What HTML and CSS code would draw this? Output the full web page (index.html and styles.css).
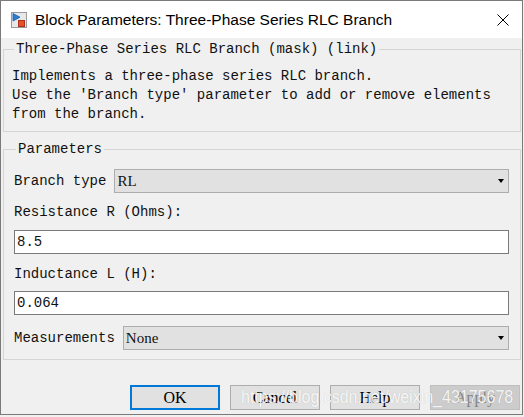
FILE: index.html
```html
<!DOCTYPE html>
<html>
<head>
<meta charset="utf-8">
<link rel="stylesheet" href="styles.css">
</head>
<body>
<div class="window">
  <div class="titlebar">
    <svg class="app-icon" width="16" height="16" viewBox="0 0 16 16">
      <rect x="0.5" y="0.5" width="15" height="15" fill="#e8e8e8" stroke="#9a9a9a"/>
      <polygon points="2,1.5 2,9 9,5.2" fill="#2a7fd4" stroke="#1a5fa8" stroke-width="0.8"/>
      <rect x="7.5" y="8.5" width="6" height="6" fill="#e8502a" stroke="#a8321a"/>
    </svg>
    <span class="title">Block Parameters: Three-Phase Series RLC Branch</span>
    <svg class="close" width="12" height="12" viewBox="0 0 12 12">
      <path d="M0.5 0.5 L11.5 11.5 M11.5 0.5 L0.5 11.5" stroke="#000" stroke-width="1" fill="none"/>
    </svg>
  </div>
  <div class="content">
    <fieldset class="group desc">
      <legend>Three-Phase Series RLC Branch (mask) (link)</legend>
      <p class="desc-text">Implements a three-phase series RLC branch.<br>Use the 'Branch type' parameter to add or remove elements<br>from the branch.</p>
    </fieldset>
    <fieldset class="group params">
      <legend>Parameters</legend>
      <div class="row">
        <span class="label">Branch type</span>
        <div class="select"><span class="select-value">RL</span><i class="arrow"></i></div>
      </div>
      <div class="label field-label first">Resistance R (Ohms):</div>
      <div class="input">8.5</div>
      <div class="label field-label second">Inductance L (H):</div>
      <div class="input">0.064</div>
      <div class="row last-row">
        <span class="label">Measurements</span>
        <div class="select"><span class="select-value">None</span><i class="arrow"></i></div>
      </div>
    </fieldset>
    <div class="buttons">
      <div class="btn default">OK</div>
      <div class="btn">Cancel</div>
      <div class="btn">Help</div>
      <div class="btn disabled">Apply</div>
    </div>
  </div>
  <div class="watermark">https://blog.csdn.net/weixin_43175678</div>
</div>
</body>
</html>
```
FILE: styles.css
```css
html, body {
  margin: 0;
  padding: 0;
  background: #f0f0f0;
}

.window {
  position: relative;
  width: 523px;
  height: 415px;
  box-sizing: border-box;
  border: 1px solid #7a7a7a;
  background: #f0f0f0;
  display: flex;
  flex-direction: column;
}

.titlebar {
  height: 37px;
  flex: none;
  background: #ffffff;
  display: flex;
  align-items: center;
}

.app-icon {
  margin-left: 10px;
  margin-top: 1px;
  flex: none;
}

.title {
  margin-left: 8px;
  font-family: "Liberation Sans", Arial, sans-serif;
  font-size: 15.5px;
  color: #000;
}

.close {
  margin-left: auto;
  margin-right: 13px;
  flex: none;
}

.content {
  flex: 1;
  display: flex;
  flex-direction: column;
  font-family: "Liberation Mono", "DejaVu Sans Mono", monospace;
  font-size: 14px;
  color: #111;
}

.group {
  margin: 0 1px 0 2px;
  border: 1px solid #d5d5d5;
  min-width: 0;
}

.group legend {
  margin-left: 2px;
  padding: 0 2px;
  line-height: 19px;
  height: 19px;
}

.desc {
  margin-top: 2px;
  padding: 8px 8px 7px 8px;
}

.desc-text {
  margin: 0;
  line-height: 19px;
}

.params {
  margin-top: 8px;
  padding: 10px 11px 9px 10px;
  display: flex;
  flex-direction: column;
}

.row {
  display: flex;
  align-items: center;
  gap: 8px;
}

.label {
  line-height: 19px;
  white-space: pre;
}

.field-label.first {
  margin-top: 10px;
  margin-bottom: 8px;
}

.field-label.second {
  margin-top: 11px;
  margin-bottom: 7px;
}

.last-row {
  margin-top: 11px;
}

.select {
  flex: 1;
  height: 24px;
  box-sizing: border-box;
  border: 1px solid #adadad;
  background: #e1e1e1;
  display: flex;
  align-items: center;
  padding: 0 4px 0 2px;
}

.select-value {
  font-family: "Liberation Serif", "Times New Roman", serif;
  font-size: 15px;
}

.arrow {
  margin-left: auto;
  width: 0;
  height: 0;
  border-left: 3.5px solid transparent;
  border-right: 3.5px solid transparent;
  border-top: 4px solid #000;
}

.input {
  height: 24px;
  box-sizing: border-box;
  border: 1px solid #7a7a7a;
  background: #ffffff;
  line-height: 22px;
  padding-left: 2px;
}

.buttons {
  margin-top: 25px;
  display: flex;
  justify-content: flex-end;
  gap: 10px;
  padding-right: 2px;
}

.btn {
  width: 90px;
  height: 25px;
  box-sizing: border-box;
  border: 1px solid #adadad;
  background: #e1e1e1;
  display: flex;
  align-items: center;
  justify-content: center;
  font-family: "Liberation Serif", "Times New Roman", serif;
  font-size: 16px;
  color: #000;
}

.btn.default {
  border: 2px solid #0078d7;
}

.btn.disabled {
  background: #cccccc;
  border-color: #bfbfbf;
  color: #838383;
}

.watermark {
  position: absolute;
  left: 240px;
  top: 385px;
  font-family: "Liberation Sans", Arial, sans-serif;
  font-size: 16px;
  line-height: 22px;
  color: rgba(255, 255, 255, 0.9);
  text-shadow: 0 0 1px rgba(0, 0, 0, 0.2);
  white-space: nowrap;
  transform: scaleY(1.2);
  transform-origin: left center;
}
```
